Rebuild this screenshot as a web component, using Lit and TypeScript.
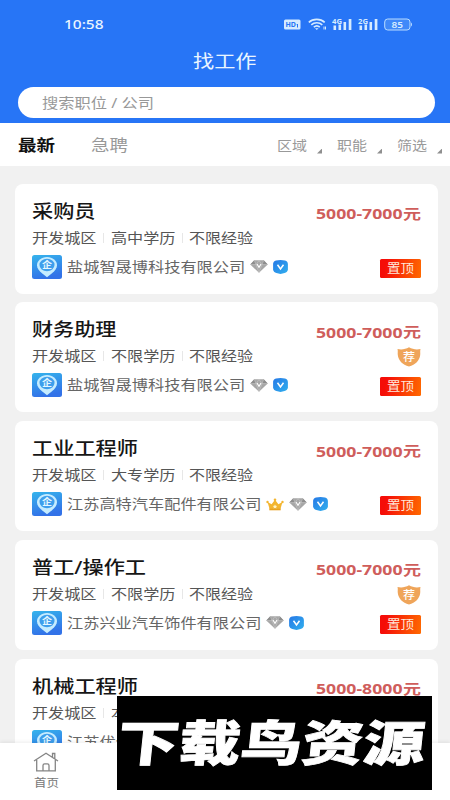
import { LitElement, html, svg, css, nothing } from "lit";
import { customElement, property } from "lit/decorators.js";

/** One line of wide-set text: fills `w` pixels, vertically centred in `h`. */
@customElement("wide-text")
class WideText extends LitElement {
  @property() text = "";
  @property({ type: Number }) w = 10;
  @property({ type: Number }) h = 20;
  @property({ type: Number }) size = 14;

  static styles = css`
    :host { display: block; flex: none; }
    svg { display: block; overflow: visible; fill: currentColor; }
  `;

  render() {
    return html`<svg width=${this.w} height=${this.h}>
      ${svg`<text x="0" y=${this.h / 2 + this.size * 0.375} font-size=${this.size}
        textLength=${this.w} lengthAdjust="spacingAndGlyphs">${this.text}</text>`}
    </svg>`;
  }
}

interface Job {
  title: string;
  titleWidth: number;
  edu: string;
  salary: string;
  company: string;
  crown?: boolean;
  recommended?: boolean;
}

const jobs: Job[] = [
  { title: "采购员", titleWidth: 63.5, edu: "高中学历", salary: "5000-7000", company: "盐城智晟博科技有限公司" },
  { title: "财务助理", titleWidth: 84.5, edu: "不限学历", salary: "5000-7000", company: "盐城智晟博科技有限公司", recommended: true },
  { title: "工业工程师", titleWidth: 106, edu: "大专学历", salary: "5000-7000", company: "江苏高特汽车配件有限公司", crown: true },
  { title: "普工/操作工", titleWidth: 114, edu: "不限学历", salary: "5000-7000", company: "江苏兴业汽车饰件有限公司", recommended: true },
  { title: "机械工程师", titleWidth: 106, edu: "本科学历", salary: "5000-8000", company: "江苏优创汽车配件有限公司" },
];

const companyIcon = html`<svg class="company-icon" viewBox="0 0 30 24">
  <defs><linearGradient id="sky" x1="0" y1="0" x2="0.3" y2="1">
    <stop offset="0" stop-color="#35b4ec"></stop><stop offset="1" stop-color="#3272e8"></stop>
  </linearGradient></defs>
  <rect width="30" height="24" rx="2.5" fill="url(#sky)"></rect>
  <path d="M15 2C9.300 2 5 5.700 5 10.300c0 3.400 2.200 5.600 5 7.900L15 22.200l5-4c2.800-2.300 5-4.500 5-7.900C25 5.700 20.700 2 15 2Z" fill="#c5ecff"></path>
  <ellipse cx="15" cy="10" rx="7.500" ry="6.200" fill="#3d9eec"></ellipse>
  <text x="10" y="13.300" font-size="8.800" font-weight="700" fill="#e4f7ff" textLength="10" lengthAdjust="spacingAndGlyphs">企</text>
</svg>`;

const crown = html`<svg width="18" height="13" viewBox="0 0 18 13">
  <path d="M1.500 4 5.600 6.300 9 1.800l3.400 4.500L16.500 4l-2 6.800h-11Z" fill="#f3b52f"></path>
  <path d="M3.300 10.300h11.400v2H3.300Z" fill="#e9a21f"></path>
  <circle cx="1.500" cy="4" r="1.200" fill="#f3b52f"></circle><circle cx="9" cy="1.700" r="1.300" fill="#f3b52f"></circle><circle cx="16.500" cy="4" r="1.200" fill="#f3b52f"></circle>
  <path d="m9 6.500.7 1.300 1.500.2-1.100 1 .3 1.500L9 9.800l-1.400.7.300-1.500-1.100-1 1.500-.2Z" fill="#fff3c8"></path>
</svg>`;

const diamond = html`<svg width="18" height="13" viewBox="0 0 18 13">
  <path d="M4.300.3h9.400L17.700 4.600 9 12.800.3 4.600Z" fill="#a6a6a6"></path>
  <path d="M4.300.3 6 4.600H.3ZM13.700.3 12 4.600h5.700Z" fill="#8d8d8d"></path>
  <path d="M4.300.5 6 4.600 9 .5l3 4.100L13.700.5M.5 4.600H6M12 4.600h5.500M6 4.600l3 7.900 3-7.900" fill="none" stroke="#cfcfcf" stroke-width=".5"></path>
  <path d="m7 4 2 3.400L11 4" fill="none" stroke="#fff" stroke-width="1.100"></path>
</svg>`;

const verified = html`<svg width="15" height="14" viewBox="0 0 15 14">
  <defs><linearGradient id="vb" x1="0" y1="0" x2="1" y2="1">
    <stop offset="0" stop-color="#2678e6"></stop><stop offset="1" stop-color="#31b0ee"></stop>
  </linearGradient></defs>
  <path d="M3 .4 7.500 0 12 .4c1.900.3 2.800 1.500 2.900 3.600v5.200c-.2 2.200-1.400 3.300-3.300 3.800L7.500 14l-4.100-1C1.500 12.500.3 11.400.1 9.200V4C.2 1.900 1.100.7 3 .4Z" fill="url(#vb)"></path>
  <path d="M4.500 4.700 7.500 9l3-4.300" fill="none" stroke="#fff" stroke-width="1.500"></path>
</svg>`;

const shield = html`<svg class="shield" width="24" height="20" viewBox="0 0 24 20">
  <path d="M.5 2C4 2.900 8.500 2.400 12 .3 15.500 2.400 20 2.900 23.500 2c-.6 2 0 4-.3 6-.6 5.500-4.700 9.700-11.200 11.500C5.500 17.700 1.400 13.500.8 8 .5 6 1.100 4 .5 2Z" fill="#efa55a"></path>
  <text x="6" y="14" font-size="11" font-weight="500" fill="#fff" textLength="12" lengthAdjust="spacingAndGlyphs">荐</text>
</svg>`;

const signal = (label: string) => html`<svg width="21" height="13" viewBox="0 0 21 13" fill="#d6ebff">
  <text x="0" y="5.800" font-size="7" font-weight="700" textLength="10" lengthAdjust="spacingAndGlyphs">${label}</text>
  <path d="M1.500 7.500h2.600V12H1.500ZM6.500 6.500h2.600V12H6.500ZM11.500 4h2.600v8h-2.600ZM16.700 1h2.700v11h-2.700Z"></path>
</svg>`;

@customElement("job-card")
class JobCard extends LitElement {
  @property({ attribute: false }) job!: Job;

  static styles = css`
    :host { display: block; }
    .card {
      box-sizing: border-box; height: 110px; padding: 15px 17.500px 0 17.500px;
      background: #fff; border-radius: 8px;
    }
    .row { display: flex; justify-content: space-between; }
    .title { color: #161616; font-weight: 500; }
    .salary { display: flex; color: #cf5d5b; font-weight: 700; margin-top: 6px; }
    .digits { margin-top: -0.500px; }
    .yuan { font-weight: 700; }
    .facts-row { height: 20px; margin-top: 5px; }
    .facts { display: flex; align-items: center; color: #555; }
    .sep { width: 1px; height: 10px; background: #e7e7e7; margin: 0 6.500px; }
    .company-row { height: 24px; margin-top: 7px; }
    .company { display: flex; align-items: center; color: #666; }
    .company-icon { width: 30px; height: 24px; margin-right: 5px; }
    .marks { display: flex; align-items: center; gap: 5.500px; margin-left: 4.500px; }
    .shield { margin: 1px 0 0; }
    .tag {
      display: flex; align-items: center; justify-content: center; box-sizing: border-box;
      width: 40.500px; height: 19px; margin-top: 4px; border-radius: 1.500px; color: #ffe9dc;
      background: linear-gradient(100deg, #f50d08 15%, #ff6a00);
    }
  `;

  render() {
    const j = this.job;
    return html`<article class="card">
      <div class="row">
        <wide-text class="title" .text=${j.title} .w=${j.titleWidth} .h=${24} .size=${18}></wide-text>
        <div class="salary">
          <wide-text class="digits" .text=${j.salary} .w=${86.5} .h=${18} .size=${15}></wide-text>
          <wide-text class="yuan" .text=${"元"} .w=${18} .h=${18} .size=${14}></wide-text>
        </div>
      </div>
      <div class="row facts-row">
        <div class="facts">
          <wide-text .text=${"开发城区"} .w=${64.5} .size=${14}></wide-text><i class="sep"></i>
          <wide-text .text=${j.edu} .w=${64.5} .size=${14}></wide-text><i class="sep"></i>
          <wide-text .text=${"不限经验"} .w=${64} .size=${14}></wide-text>
        </div>
        ${j.recommended ? shield : nothing}
      </div>
      <div class="row company-row">
        <div class="company">
          ${companyIcon}
          <wide-text .text=${j.company} .w=${j.company.length * 16.2} .size=${14}></wide-text>
          <div class="marks">${j.crown ? crown : nothing}${diamond}${verified}</div>
        </div>
        <div class="tag"><wide-text .text=${"置顶"} .w=${27} .h=${19} .size=${12}></wide-text></div>
      </div>
    </article>`;
  }
}

@customElement("app-root")
class AppRoot extends LitElement {
  static styles = css`
    :host {
      display: block; position: relative; width: 450px; height: 800px; overflow: hidden;
      background: #f1f1f1; font-family: "Noto Sans", "Noto Sans CJK SC", sans-serif;
    }
    .header { box-sizing: border-box; height: 123px; background: #2775f6; color: #eaf5ff; }
    .status { display: flex; align-items: center; justify-content: space-between; height: 24px; padding: 12px 37px 0 64px; }
    .time { font-weight: 500; }
    .indicators { display: flex; align-items: center; }
    .hd { margin-right: 7px; }
    .wifi { margin-right: 5px; }
    .sim { display: flex; gap: 5px; margin-right: 5px; }
    .heading { display: flex; justify-content: center; height: 24px; margin: 13px 0 0 0; }
    .search {
      display: flex; align-items: center; box-sizing: border-box; height: 31px;
      margin: 14px 15.500px 0 18px; padding-left: 23.500px; border-radius: 16px; background: #fff; color: #989898;
    }
    .tabs { display: flex; align-items: center; height: 43px; padding-left: 18px; background: #fff; color: #999; }
    .active { color: #111; font-weight: 700; margin-right: 35.500px; }
    .filters { display: flex; margin-left: auto; gap: 14.500px; padding-right: 8px; }
    .filter { display: flex; align-items: flex-end; gap: 10.500px; }
    .arrow { width: 5px; height: 5px; margin-bottom: 1px; background: #8f8f8f; clip-path: polygon(100% 0, 100% 100%, 0 100%); }
    .list { display: flex; flex-direction: column; gap: 8.700px; padding: 17.800px 12px 0 14.500px; }
    .nav {
      position: absolute; left: 0; right: 0; bottom: 0; height: 57px; box-sizing: border-box;
      padding: 9px 0 0 33px; background: #fff; box-shadow: 0 -1px 4px rgba(0, 0, 0, 0.08);
    }
    .nav-item { display: flex; flex-direction: column; align-items: center; width: 26px; gap: 3px; color: #777; }
    .banner {
      position: absolute; left: 117px; top: 696px; width: 315px; height: 94px; box-sizing: border-box; padding-right: 7px;
      display: flex; align-items: center; justify-content: center; background: #000; color: #fff; font-weight: 900;
    }
    .slanted { transform: skewX(-6deg); stroke: #fff; stroke-width: 0.800px; }
  `;

  render() {
    return html`
      <header class="header">
        <div class="status">
          <wide-text class="time" .text=${"10:58"} .w=${39.5} .h=${24} .size=${13}></wide-text>
          <div class="indicators">
            <svg class="hd" width="17" height="11" viewBox="0 0 17 11">
              <rect width="16.500" height="10" y=".5" rx="1.500" fill="#d6ebff"></rect>
              <text x="1.500" y="8.200" font-size="7.500" font-weight="700" fill="#2775f6" textLength="10.500" lengthAdjust="spacingAndGlyphs">HD</text>
              <path d="M13.500 5v3.500M12.700 5.500h.8" stroke="#2775f6" fill="none"></path>
            </svg>
            <svg class="wifi" width="19" height="13" viewBox="0 0 19 13" fill="none" stroke="#d6ebff" stroke-width="1.600">
              <path d="M.8 4.300C5 .4 12.500.4 16.700 4.300M3.300 6.800c3-2.700 8-2.700 11 0M5.800 9.100c1.800-1.500 4.300-1.500 6 0"></path>
              <path d="m7 10.300 1.800 1.700 1.800-1.700Z" fill="#d6ebff" stroke="none"></path>
              <path d="M16 8.500v3M17.500 8.500v3" stroke-width="1"></path>
            </svg>
            <div class="sim">${signal("4G")}${signal("2G")}</div>
            <svg width="29" height="13" viewBox="0 0 29 13">
              <rect x=".7" y="1" width="25.300" height="11" rx="3" fill="#4089f9" stroke="#b9dcff"></rect>
              <path d="M27 4.500c1.300.5 1.300 3.500 0 4Z" fill="#b9dcff"></path>
              <text x="7.500" y="9.600" font-size="8.500" font-weight="600" fill="#d9edff" textLength="11.500" lengthAdjust="spacingAndGlyphs">85</text>
            </svg>
          </div>
        </div>
        <div class="heading"><wide-text .text=${"找工作"} .w=${63.5} .h=${24} .size=${18}></wide-text></div>
        <div class="search"><wide-text .text=${"搜索职位 / 公司"} .w=${112} .size=${13.500}></wide-text></div>
      </header>
      <nav class="tabs">
        <wide-text class="active" .text=${"最新"} .w=${37} .size=${15.5}></wide-text>
        <wide-text .text=${"急聘"} .w=${37} .size=${15.5}></wide-text>
        <div class="filters">
          ${["区域", "职能", "筛选"].map((label) => html`<div class="filter">
            <wide-text .text=${label} .w=${30} .size=${13}></wide-text><i class="arrow"></i>
          </div>`)}
        </div>
      </nav>
      <main class="list">${jobs.map((job) => html`<job-card .job=${job}></job-card>`)}</main>
      <footer class="nav">
        <div class="nav-item">
          <svg width="26" height="20" viewBox="0 0 26 20" fill="none" stroke="#858585" stroke-width="1.300">
            <path d="M1 9 13 1.200 25 9M3.700 8v10.800h18.600V8M19.500 5V1.500h2.300v5M10 18.500v-5c0-1 .6-1.600 1.600-1.600h2.800c1 0 1.600.6 1.600 1.600v5"></path>
          </svg>
          <wide-text .text=${"首页"} .w=${25} .h=${16} .size=${11}></wide-text>
        </div>
      </footer>
      <div class="banner"><wide-text class="slanted" .text=${"下载鸟资源"} .w=${307} .h=${94} .size=${48.5}></wide-text></div>
    `;
  }
}
